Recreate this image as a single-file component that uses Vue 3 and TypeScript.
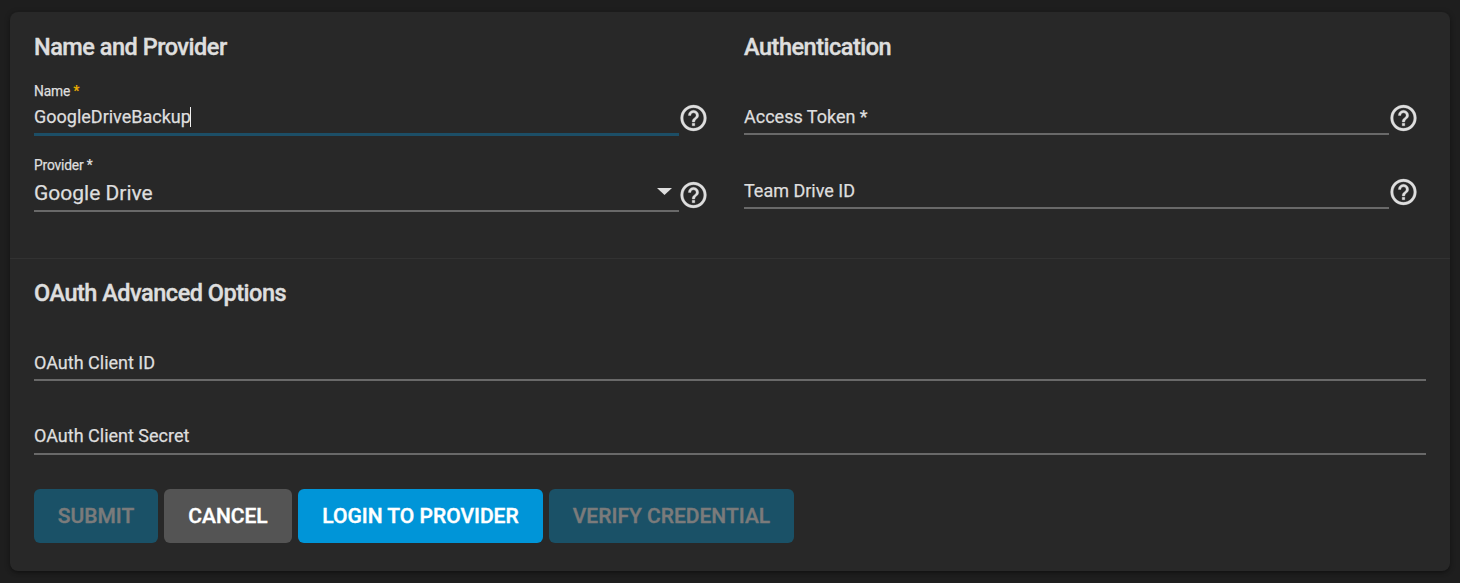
<script setup lang="ts">
import { ref } from 'vue'

interface Action {
  text: string
  kind: 'primary' | 'neutral'
  disabled: boolean
  size: string
}

const name = ref('GoogleDriveBackup')
const provider = ref('Google Drive')
const authFields: string[] = ['Access Token *', 'Team Drive ID']
const oauthFields: string[] = ['OAuth Client ID', 'OAuth Client Secret']
const actions: Action[] = [
  { text: 'Submit', kind: 'primary', disabled: true, size: 'submit' },
  { text: 'Cancel', kind: 'neutral', disabled: false, size: 'cancel' },
  { text: 'Login to Provider', kind: 'primary', disabled: false, size: 'wide' },
  { text: 'Verify Credential', kind: 'primary', disabled: true, size: 'wide' },
]
const helpPath =
  'M11 18h2v-2h-2v2M12 2A10 10 0 0 0 2 12a10 10 0 0 0 10 10 10 10 0 0 0 10-10A10 10 0 0 0 12 2m0 18c-4.41 0-8-3.59-8-8s3.59-8 8-8 8 3.59 8 8-3.59 8-8 8m0-14a4 4 0 0 0-4 4h2a2 2 0 0 1 2-2 2 2 0 0 1 2 2c0 2-3 1.75-3 5h2c0-2.25 3-2.5 3-5a4 4 0 0 0-4-4Z'
</script>

<template>
  <main class="page">
    <form class="card" @submit.prevent>
      <div class="columns">
        <section>
          <h3>Name and Provider</h3>
          <div class="row row-name">
            <div class="field focused">
              <label class="label">Name <span class="star">*</span></label>
              <div class="value">
                <span>{{ name }}</span><i class="caret"></i>
              </div>
            </div>
            <svg class="help" viewBox="0 0 24 24"><path :d="helpPath" /></svg>
          </div>
          <div class="row row-provider">
            <div class="field">
              <label class="label provider-label">Provider *</label>
              <div class="value select">
                <span>{{ provider }}</span>
                <svg class="arrow" viewBox="0 0 15 7"><path d="M0 0h15L7.5 7z" /></svg>
              </div>
            </div>
            <svg class="help" viewBox="0 0 24 24"><path :d="helpPath" /></svg>
          </div>
        </section>
        <section>
          <h3>Authentication</h3>
          <div v-for="text in authFields" :key="text" class="row">
            <div class="field">
              <div class="value"><span>{{ text }}</span></div>
            </div>
            <svg class="help" viewBox="0 0 24 24"><path :d="helpPath" /></svg>
          </div>
        </section>
      </div>
      <section class="advanced">
        <h3>OAuth Advanced Options</h3>
        <div v-for="text in oauthFields" :key="text" class="row">
          <div class="field">
            <div class="value"><span>{{ text }}</span></div>
          </div>
        </div>
        <div class="actions">
          <button
            v-for="a in actions"
            :key="a.text"
            type="button"
            :class="[a.kind, a.size]"
            :disabled="a.disabled"
          >{{ a.text }}</button>
        </div>
      </section>
    </form>
  </main>
</template>

<style>
body {
  margin: 0;
  background: #1e1e1e;
}
</style>

<style scoped>
.page {
  box-sizing: border-box;
  height: 583px;
  padding: 12px 10px;
  overflow: hidden;
  background: #1e1e1e;
  color: #dedede;
  font-family: Roboto, "Liberation Sans", sans-serif;
  -webkit-text-stroke: 0.25px currentColor;
}
.card {
  height: 559px;
  border-radius: 8px;
  background: #282828;
  box-shadow: 0 2px 4px -1px rgba(0, 0, 0, 0.4), 0 1px 6px rgba(0, 0, 0, 0.18);
}
.columns {
  display: grid;
  grid-template-columns: 1fr 1fr;
  gap: 28px;
  box-sizing: border-box;
  height: 247px;
  padding: 0 24px;
  border-bottom: 1px solid #323232;
}
.advanced {
  padding: 0 24px;
}
h3 {
  box-sizing: border-box;
  height: 62px;
  margin: 0;
  padding-top: 21px;
  font-size: 23.5px;
  font-weight: 500;
  line-height: 28px;
  letter-spacing: -0.49px;
  -webkit-text-stroke-width: 0.4px;
}
.advanced h3 {
  height: 61px;
  padding-top: 20px;
}
.row {
  display: flex;
  align-items: flex-end;
  height: 74px;
}
h3 + .row {
  height: 61px;
}
h3 + .row-name {
  height: 62px;
}
.row-provider {
  height: 76px;
}
.field {
  flex: 1;
  border-bottom: 2px solid #696969;
}
.focused {
  border-bottom: 3px solid #1c4e66;
}
.label {
  display: block;
  height: 20px;
  margin-bottom: 4px;
  font-size: 13.8px;
  line-height: 20px;
  letter-spacing: -0.16px;
}
.provider-label {
  margin-bottom: 5px;
}
.star {
  color: #ecb100;
}
.value {
  display: flex;
  align-items: center;
  height: 24px;
  padding-bottom: 4px;
  font-size: 18px;
  line-height: 24px;
}
.advanced .row:nth-child(3) .value {
  padding-bottom: 5px;
}
.caret {
  width: 1px;
  height: 20px;
  margin-left: -1px;
  background: #f0f0f0;
}
.select {
  justify-content: space-between;
  height: 26px;
  padding-bottom: 4px;
  font-size: 21px;
}
.arrow {
  width: 15px;
  height: 7px;
  margin: 0 7px 3px 0;
  fill: #dedede;
}
.help {
  flex: none;
  width: 31px;
  height: 32px;
  margin: 0 7px 1px -1px;
  fill: #dedede;
  stroke: #dedede;
  stroke-width: 0.25;
}
.row-name .help {
  margin-bottom: 2px;
}
.actions {
  display: flex;
  gap: 6px;
  margin-top: 34px;
}
button {
  height: 54px;
  padding: 0;
  border: 0;
  border-radius: 6px;
  color: #fff;
  font: 500 21px/54px Roboto, "Liberation Sans", sans-serif;
  text-transform: uppercase;
  -webkit-text-stroke: 0.4px currentColor;
}
.primary {
  background: #0095d8;
}
.neutral {
  background: #545454;
}
button:disabled {
  background: #1a5167;
  color: #7b7b7b;
}
.submit {
  width: 124px;
}
.cancel {
  width: 128px;
}
.wide {
  width: 245px;
}
</style>
